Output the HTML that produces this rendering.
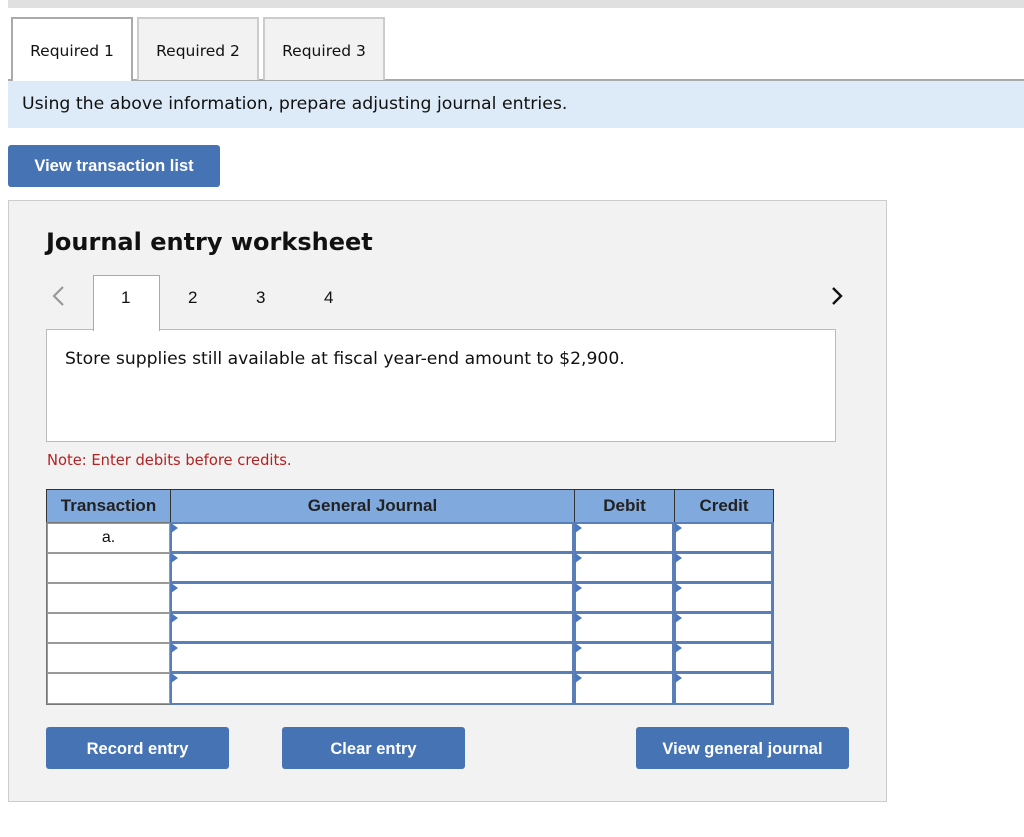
<!DOCTYPE html>
<html><head><style>
*{box-sizing:border-box;margin:0;padding:0}
body{width:1024px;height:837px;background:#fff;position:relative;font-family:"DejaVu Sans","Liberation Sans",sans-serif;overflow:hidden;color:#111}
.a{position:absolute}
.tab{position:absolute;top:17px;height:63px;width:122px;border:2px solid #ccc;border-bottom:none;background:#f2f2f2;font-size:15.5px;text-align:center;line-height:64px}
.btn{position:absolute;background:#4673b4;color:#fff;font-family:"Liberation Sans",sans-serif;font-weight:bold;font-size:16.5px;text-align:center;border-radius:3px}
.cell{position:absolute;background:#fff;border:1px solid #999}
.inp{position:absolute;background:#fff;border:2px solid #5a7fb8}
.inp:before{content:"";position:absolute;left:-1px;top:-1px;border-left:7px solid #4a78c2;border-top:5px solid transparent;border-bottom:5px solid transparent}
.hd{position:absolute;top:489px;height:34px;background:#80aade;border:1px solid #333;font-family:"Liberation Sans",sans-serif;font-weight:bold;font-size:17px;text-align:center;line-height:32px;color:#222}
</style></head><body>
<div class="a" style="left:8px;top:0;width:1016px;height:8px;background:#e0e0e0"></div>
<div class="a" style="left:8px;top:79px;width:1016px;height:2px;background:#aaa"></div>
<div class="tab" style="left:11px;background:#fff;border-color:#aaa;height:64px">Required 1</div>
<div class="tab" style="left:137px">Required 2</div>
<div class="tab" style="left:263px">Required 3</div>
<div class="a" style="left:8px;top:81px;width:1016px;height:47px;background:#ddeaf7;font-size:17.3px;line-height:47px;padding-left:14px">Using the above information, prepare adjusting journal entries.</div>
<div class="btn" style="left:8px;top:145px;width:212px;height:42px;line-height:43px">View transaction list</div>
<div class="a" style="left:8px;top:200px;width:879px;height:602px;background:#f2f2f2;border:1px solid #ccc"></div>
<div class="a" style="left:46px;top:228px;font-size:24px;font-weight:bold;font-family:'DejaVu Sans',sans-serif">Journal entry worksheet</div>
<svg class="a" style="left:50px;top:285px" width="16" height="22"><path d="M13 2 L4 11 L13 20" fill="none" stroke="#999" stroke-width="2.2"/></svg>
<svg class="a" style="left:830px;top:285px" width="16" height="22"><path d="M3 3 L11 11 L3 19" fill="none" stroke="#111" stroke-width="2.4"/></svg>
<div class="a" style="left:93px;top:275px;width:67px;height:56px;background:#fff;border:1px solid #aaa;border-bottom:none;z-index:2"></div>
<div class="a" style="left:121px;top:288px;font-size:17px;font-family:'Liberation Sans',sans-serif;z-index:3">1</div>
<div class="a" style="left:188px;top:288px;font-size:17px;font-family:'Liberation Sans',sans-serif">2</div>
<div class="a" style="left:256px;top:288px;font-size:17px;font-family:'Liberation Sans',sans-serif">3</div>
<div class="a" style="left:324px;top:288px;font-size:17px;font-family:'Liberation Sans',sans-serif">4</div>
<div class="a" style="left:46px;top:329px;width:790px;height:113px;background:#fff;border:1px solid #bbb;font-size:17.2px;padding:19px 0 0 18px">Store supplies still available at fiscal year-end amount to $2,900.</div>
<div class="a" style="left:47px;top:452px;font-size:14.7px;color:#b22222">Note: Enter debits before credits.</div>
<div class="hd" style="left:46px;width:125px">Transaction</div>
<div class="hd" style="left:170px;width:405px">General Journal</div>
<div class="hd" style="left:574px;width:101px">Debit</div>
<div class="hd" style="left:674px;width:100px">Credit</div>
<div class="a" style="left:46px;top:522px;width:728px;height:183px;background:#777"></div>
<div class="cell" style="left:47px;top:523px;width:123px;height:30px;text-align:center;font-family:'Liberation Sans',sans-serif;font-size:16px;line-height:28px">a.</div>
<div class="cell" style="left:47px;top:553px;width:123px;height:30px"></div>
<div class="cell" style="left:47px;top:583px;width:123px;height:30px"></div>
<div class="cell" style="left:47px;top:613px;width:123px;height:30px"></div>
<div class="cell" style="left:47px;top:643px;width:123px;height:30px"></div>
<div class="cell" style="left:47px;top:673px;width:123px;height:31px"></div>
<div class="inp" style="left:170px;top:522px;width:404px;height:31px"></div>
<div class="inp" style="left:574px;top:522px;width:100px;height:31px"></div>
<div class="inp" style="left:674px;top:522px;width:99px;height:31px"></div>
<div class="inp" style="left:170px;top:552px;width:404px;height:31px"></div>
<div class="inp" style="left:574px;top:552px;width:100px;height:31px"></div>
<div class="inp" style="left:674px;top:552px;width:99px;height:31px"></div>
<div class="inp" style="left:170px;top:582px;width:404px;height:31px"></div>
<div class="inp" style="left:574px;top:582px;width:100px;height:31px"></div>
<div class="inp" style="left:674px;top:582px;width:99px;height:31px"></div>
<div class="inp" style="left:170px;top:612px;width:404px;height:31px"></div>
<div class="inp" style="left:574px;top:612px;width:100px;height:31px"></div>
<div class="inp" style="left:674px;top:612px;width:99px;height:31px"></div>
<div class="inp" style="left:170px;top:642px;width:404px;height:31px"></div>
<div class="inp" style="left:574px;top:642px;width:100px;height:31px"></div>
<div class="inp" style="left:674px;top:642px;width:99px;height:31px"></div>
<div class="inp" style="left:170px;top:672px;width:404px;height:33px"></div>
<div class="inp" style="left:574px;top:672px;width:100px;height:33px"></div>
<div class="inp" style="left:674px;top:672px;width:99px;height:33px"></div>
<div class="btn" style="left:46px;top:727px;width:183px;height:42px;line-height:44px">Record entry</div>
<div class="btn" style="left:282px;top:727px;width:183px;height:42px;line-height:44px">Clear entry</div>
<div class="btn" style="left:636px;top:727px;width:213px;height:42px;line-height:44px">View general journal</div>
</body></html>
